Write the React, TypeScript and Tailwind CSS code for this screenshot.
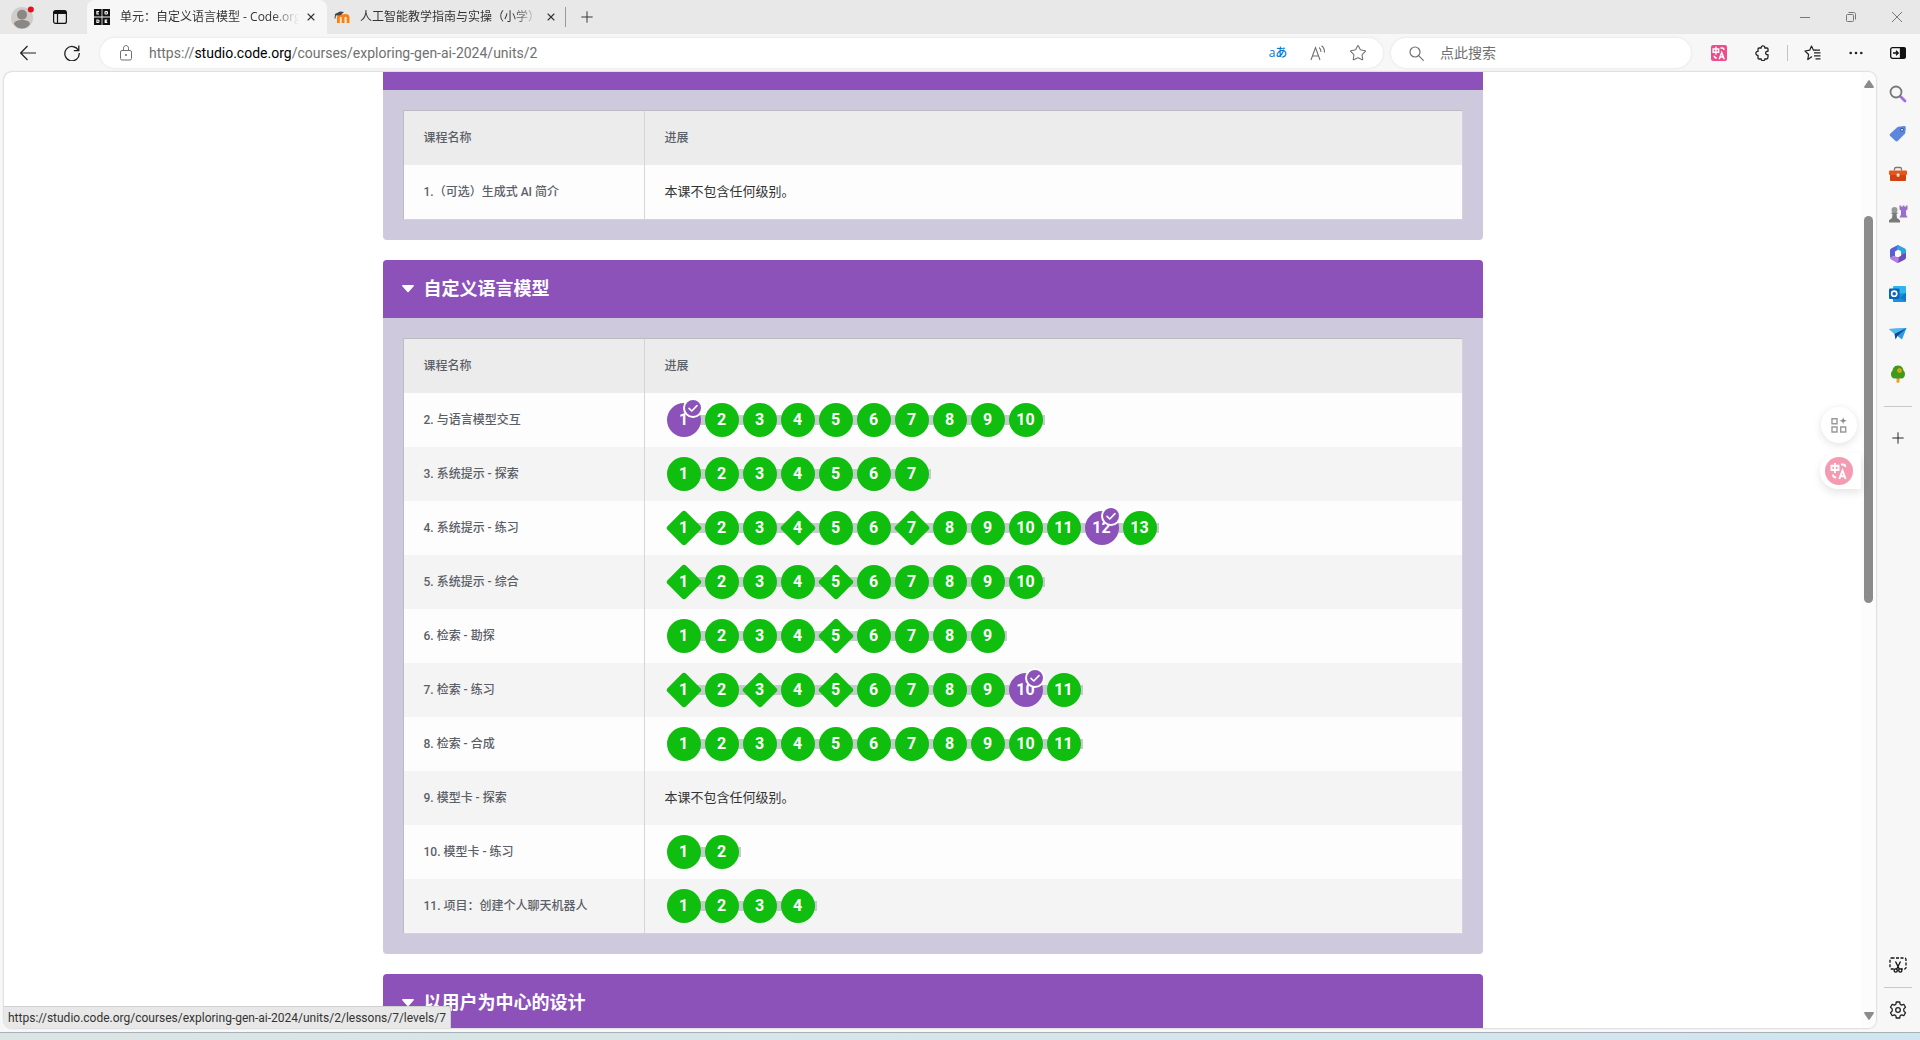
import React from 'react';
import { Plus, Star, X } from 'lucide-react';

interface Level {
  n: number;
  diamond: boolean;
  checked: boolean;
}

interface Lesson {
  name: string;
  levels: Level[];
}

const makeLevels = (count: number, diamonds: number[] = [], checked: number[] = []): Level[] =>
  Array.from({ length: count }, (_, i) => ({
    n: i + 1,
    diamond: diamonds.includes(i + 1),
    checked: checked.includes(i + 1),
  }));

const introLessons: Lesson[] = [{ name: '1.（可选）生成式 AI 简介', levels: [] }];

const modelLessons: Lesson[] = [
  { name: '2. 与语言模型交互', levels: makeLevels(10, [], [1]) },
  { name: '3. 系统提示 - 探索', levels: makeLevels(7) },
  { name: '4. 系统提示 - 练习', levels: makeLevels(13, [1, 4, 7], [12]) },
  { name: '5. 系统提示 - 综合', levels: makeLevels(10, [1, 5]) },
  { name: '6. 检索 - 勘探', levels: makeLevels(9, [5]) },
  { name: '7. 检索 - 练习', levels: makeLevels(11, [1, 3, 5], [10]) },
  { name: '8. 检索 - 合成', levels: makeLevels(11) },
  { name: '9. 模型卡 - 探索', levels: [] },
  { name: '10. 模型卡 - 练习', levels: makeLevels(2) },
  { name: '11. 项目：创建个人聊天机器人', levels: makeLevels(4) },
];

/* ---------- Course page ---------- */

function LevelBubble({ level }: { level: Level }) {
  return (
    <a
      href="#level"
      className="relative flex h-[34px] w-[34px] items-center justify-center text-base font-bold text-white"
    >
      {level.diamond ? (
        <span className="absolute h-[26px] w-[26px] rotate-45 rounded-[3px] bg-[#0fbe0f]" />
      ) : (
        <span
          className={`absolute inset-0 rounded-full ${level.checked ? 'bg-[#8c52ba]' : 'bg-[#0fbe0f]'}`}
        />
      )}
      <span className="relative">{level.n}</span>
      {level.checked && (
        <span className="absolute -top-[5px] left-4 flex h-5 w-5 items-center justify-center rounded-full border-2 border-white bg-[#8c52ba]">
          <svg viewBox="0 0 16 16" className="h-4 w-4" fill="none" stroke="white" strokeWidth="1.6">
            <path d="M4 8.300l2.800 2.700L12 5.600" strokeLinecap="round" strokeLinejoin="round" />
          </svg>
        </span>
      )}
    </a>
  );
}

function LessonTable({ lessons }: { lessons: Lesson[] }) {
  return (
    <table className="w-full table-fixed border-separate border-spacing-0 border border-[#bbbbc1] border-r-[#d2d2d8] border-b-[#d2d2d8] text-left text-[#5b6067]">
      <thead>
        <tr className="h-[54px] bg-[#ececec] text-xs">
          <th className="w-[241px] border-r border-[#d5d5d8] px-5 font-medium">课程名称</th>
          <th className="px-5 font-medium">进展</th>
        </tr>
      </thead>
      <tbody>
        {lessons.map((lesson) => (
          <tr key={lesson.name} className="h-[54px] bg-[#fdfdfd] even:bg-[#f4f4f4]">
            <td className="border-r border-[#d5d5d8] px-5 text-xs font-medium">{lesson.name}</td>
            <td className="px-5 text-[13px] text-[#333]">
              {lesson.levels.length === 0 ? (
                '本课不包含任何级别。'
              ) : (
                <div className="relative flex w-max gap-1 px-0.5">
                  <span className="absolute top-3 right-0 left-5 h-2.5 bg-[#c6cacd]" />
                  {lesson.levels.map((level) => (
                    <LevelBubble key={level.n} level={level} />
                  ))}
                </div>
              )}
            </td>
          </tr>
        ))}
      </tbody>
    </table>
  );
}

function SectionTitle({ children }: { children: React.ReactNode }) {
  return (
    <h2 className="flex h-[58px] items-center bg-[#8c52ba] px-[19px] text-lg font-bold text-white">
      <button className="flex items-center gap-2.5">
        <svg viewBox="0 0 12 8" className="h-2 w-3" fill="currentColor">
          <path d="M.8 0h10.400c.7 0 1 .8.500 1.300L6.600 6.900c-.3.400-.9.400-1.200 0L.3 1.300C-.2.8.1 0 .8 0z" />
        </svg>
        {children}
      </button>
    </h2>
  );
}

function CoursePage() {
  return (
    <main className="relative flex min-w-0 flex-1 overflow-hidden rounded-lg bg-white shadow-[0_0_2px_rgba(0,0,0,0.35)]">
      <div className="min-w-0 flex-1 overflow-hidden font-['Roboto','Noto_Sans_CJK_SC',sans-serif]">
        <div className="mx-auto flex max-w-[1100px] flex-col gap-5">
          <section className="overflow-hidden rounded-b-[4px] bg-[#cfc9de]">
            <div className="h-[18px] bg-[#8c52ba]" />
            <div className="p-5">
              <LessonTable lessons={introLessons} />
            </div>
          </section>
          <section className="overflow-hidden rounded-[4px] bg-[#cfc9de]">
            <SectionTitle>自定义语言模型</SectionTitle>
            <div className="p-5">
              <LessonTable lessons={modelLessons} />
            </div>
          </section>
          <section className="overflow-hidden rounded-t-[4px] bg-[#cfc9de]">
            <SectionTitle>以用户为中心的设计</SectionTitle>
          </section>
        </div>
      </div>

      {/* Scrollbar */}
      <div className="flex w-[15px] flex-col items-center justify-between bg-[#fcfcfc] py-2">
        <svg viewBox="0 0 10 8" className="h-2 w-2.5" fill="#8b8b8b">
          <path d="M4.300.6c.4-.6 1-.6 1.400 0l4 6c.4.700 0 1.400-.7 1.400H1C.3 8-.1 7.300.3 6.600z" />
        </svg>
        <div className="flex w-[9px] flex-1 flex-col pt-32">
          <div className="h-[387px] rounded-full bg-[#8b8b8b]" />
        </div>
        <svg viewBox="0 0 10 8" className="h-2 w-2.5" fill="#8b8b8b">
          <path d="M4.300 7.400c.4.600 1 .6 1.400 0l4-6C10.100.7 9.700 0 9 0H1C.3 0-.1.700.3 1.400z" />
        </svg>
      </div>

      {/* Floating tools of the translate extension */}
      <div className="absolute top-[335px] right-[15px] flex flex-col gap-2.5">
        <button
          aria-label="工具"
          className="ml-px flex h-9 w-9 items-center justify-center rounded-full bg-white shadow-[0_2px_8px_rgba(0,0,0,0.12)]"
        >
          <svg viewBox="0 0 16 16" className="h-4 w-4" fill="none" stroke="#999" strokeWidth="1.400">
            <path d="M1 1.700h5v5H1zM1 10h5v5H1zM9.700 10h5v5h-5z" />
            <path d="M12.200 0c.4 2.600 1 3.300 3.800 3.800-2.800.5-3.400 1.200-3.800 3.800-.4-2.600-1-3.300-3.800-3.800 2.800-.5 3.400-1.200 3.800-3.800z" fill="#888" stroke="none" />
          </svg>
        </button>
        <button
          aria-label="翻译"
          className="flex h-9 w-[41px] items-center rounded-l-full bg-white pl-[5px] shadow-[0_4px_8px_rgba(0,0,0,0.1)]"
        >
          <span className="flex h-7 w-7 items-center justify-center rounded-full bg-[#f49ab2]">
            <TranslateGlyph className="h-[18px] w-[18px]" />
          </span>
        </button>
      </div>

      {/* Link target shown while hovering */}
      <div className="absolute bottom-0 left-0 flex h-[22px] items-center rounded-tr-[3px] border-t border-r border-[#d0d0d0] bg-[#e8e8e8] px-1 text-xs text-[#333] font-['Roboto',sans-serif]">
        https://studio.code.org/courses/exploring-gen-ai-2024/units/2/lessons/7/levels/7
      </div>
    </main>
  );
}

/* ---------- Browser chrome ---------- */

function TranslateGlyph({ className }: { className: string }) {
  return (
    <svg viewBox="0 0 18 18" className={className} fill="none" stroke="#fff" strokeWidth="1.900">
      <path d="M1.500 3.800h7v4.200h-7zM5 1v10" />
      <path d="M9.300 17l3.200-8.500 3.200 8.500M10.500 14.200h4" />
      <path d="M11 2.500h2c1.500 0 2.300.8 2.300 2.500M3 12.500c0 2 .8 3 3.200 3" />
    </svg>
  );
}

function CodeOrgLogo() {
  return (
    <svg viewBox="0 0 16 16" className="h-4 w-4 shrink-0">
      <path d="M0 0h7.600v7.600H0zM8.400 0H16v7.600H8.400zM0 8.400h7.600V16H0zM8.400 8.400H16V16H8.400z" fill="#111" />
      <g fill="none" stroke="#fff" strokeWidth="1.100">
        <path d="M5 2.600H2.900v2.400H5" />
        <rect x="11" y="2.600" width="2.400" height="2.400" rx=".6" />
        <path d="M2.900 11h1.200c1.300 0 1.300 2.500 0 2.500H2.900z" />
        <path d="M13.300 11h-2.100v2.500h2.100M11.200 12.200h1.800" />
      </g>
    </svg>
  );
}

function MoodleLogo() {
  return (
    <svg viewBox="0 0 16 16" className="h-4 w-4 shrink-0" fill="none">
      <path
        d="M4.400 14V8.600c0-2.900 4.700-2.900 4.700 0V14M9.100 8.600c0-2.900 5-2.900 5 0V14"
        stroke="#f98012"
        strokeWidth="2.800"
      />
      <path d="M.5 5.200L6 2.400l4 .6-3.600 3.200-4 .4z" fill="#444" />
      <path d="M1.600 5.500L1 9.500" stroke="#444" />
    </svg>
  );
}

function Tab({ icon, title, active }: { icon: React.ReactNode; title: string; active?: boolean }) {
  return (
    <div
      className={`flex w-60 items-center gap-1.5 pr-2.5 pl-[7px] ${active ? 'rounded-t-lg bg-[#f7f7f7]' : ''}`}
    >
      {icon}
      <span className="ml-1 min-w-0 flex-1 overflow-hidden mask-r-from-85% whitespace-nowrap">{title}</span>
      <button aria-label="关闭标签页">
        <X className="h-3 w-3" strokeWidth={2.2} />
      </button>
    </div>
  );
}

function TabStrip() {
  return (
    <header className="flex h-[34px] shrink-0 items-stretch bg-[#e8e8e8] text-xs text-[#333]">
      <div className="flex w-[87px] items-center gap-[19px] pl-[11px]">
        <button aria-label="个人资料">
          <svg viewBox="0 0 23 23" className="h-[23px] w-[23px]">
            <circle cx="11" cy="12" r="11" fill="#cfccc9" />
            <circle cx="11" cy="8.800" r="5" fill="#8a8785" />
            <path d="M3 18c0-5.500 16-5.500 16 0-3.500 6-12.500 6-16 0z" fill="#8a8785" />
            <circle cx="19.800" cy="3.500" r="3" fill="#e8101c" />
          </svg>
        </button>
        <button aria-label="标签页操作">
          <svg viewBox="0 0 14 14" className="h-3.5 w-3.5" fill="none" stroke="#111" strokeWidth="1.200">
            <rect x=".6" y=".6" width="12.800" height="12.800" rx="2" />
            <path d="M1 2.400h12" strokeWidth="3.200" />
            <path d="M4.500 4v9.500" />
          </svg>
        </button>
      </div>
      <Tab icon={<CodeOrgLogo />} title="单元：自定义语言模型 - Code.org" active />
      <Tab icon={<MoodleLogo />} title="人工智能教学指南与实操（小学）" />
      <div className="-ml-0.5 h-5 w-px self-center bg-[#999]" />
      <button className="px-3" aria-label="新建标签页">
        <Plus className="h-[18px] w-[18px]" strokeWidth={1.3} />
      </button>
      <div className="ml-auto flex items-center gap-9 pr-[18px] text-[#777]">
        <button aria-label="最小化">
          <svg viewBox="0 0 10 10" className="h-2.5 w-2.5" stroke="currentColor">
            <path d="M0 5.500h10" />
          </svg>
        </button>
        <button aria-label="还原">
          <svg viewBox="0 0 10 10" className="h-2.5 w-2.5" fill="none" stroke="currentColor">
            <rect x=".5" y="2.500" width="7" height="7" rx="1" />
            <path d="M2.500.500h5c1.500 0 2 .5 2 2v5" />
          </svg>
        </button>
        <button aria-label="关闭">
          <svg viewBox="0 0 10 10" className="h-2.5 w-2.5" stroke="currentColor">
            <path d="M0 0l10 10M10 0L0 10" />
          </svg>
        </button>
      </div>
    </header>
  );
}

function Toolbar() {
  return (
    <div className="flex h-[38px] shrink-0 items-center text-[#222]">
      <div className="flex w-[100px] items-center gap-7 pl-5">
        <button aria-label="后退">
          <svg viewBox="0 0 16 16" className="h-4 w-4" fill="none" stroke="currentColor" strokeWidth="1.200">
            <path d="M16 8H.8M7.500 1L.7 8l6.800 7" />
          </svg>
        </button>
        <button aria-label="刷新">
          <svg viewBox="0 0 16 16" className="h-4 w-4" fill="none" stroke="currentColor" strokeWidth="1.300">
            <path d="M14.500 5.500A7.200 7.200 0 1 0 15.200 8M14.800.6v5H9.800" />
          </svg>
        </button>
      </div>

      <div className="mr-2 flex h-[30px] min-w-0 flex-1 items-center rounded-full bg-white pr-[5px] pl-5 text-[#707070] shadow-[0_0_3px_rgba(0,0,0,0.1)]">
        <svg viewBox="0 0 12 16" className="mr-[17px] h-4 w-3 shrink-0" fill="none" stroke="currentColor">
          <rect x=".5" y="5.500" width="11" height="9.500" rx="1.500" />
          <path d="M3.500 5.500V3.200c0-3.500 5-3.500 5 0v2.300" />
          <circle cx="6" cy="10" r=".6" fill="currentColor" />
        </svg>
        <div
          role="textbox"
          aria-label="地址栏"
          contentEditable
          suppressContentEditableWarning
          className="min-w-0 flex-1 text-sm font-['Roboto',sans-serif]"
        >
          https://<span className="text-black">studio.code.org</span>/courses/exploring-gen-ai-2024/units/2
        </div>
        <button className="w-10 text-xs font-medium text-[#0078d4]">aあ</button>
        <button className="flex w-10 justify-center" aria-label="大声朗读">
          <svg viewBox="0 0 16 16" className="h-4 w-4" fill="none" stroke="currentColor" strokeWidth="1.100">
            <path d="M1 15L5.500 2.500 10 15M2.500 11h6" />
            <path d="M9 2.500c1.500 1 2 2.500 2 4.500M11.500.8c2.300 1.500 3 3.700 3 6.700" />
          </svg>
        </button>
        <button className="flex w-10 justify-center" aria-label="收藏">
          <Star className="h-[18px] w-[18px]" strokeWidth={1.4} />
        </button>
      </div>

      <div className="flex h-[30px] w-[300px] items-center gap-4 rounded-full bg-white px-[18px] text-[#707070] shadow-[0_0_3px_rgba(0,0,0,0.1)]">
        <svg viewBox="0 0 15 15" className="h-[15px] w-[15px] shrink-0" fill="none" stroke="currentColor" strokeWidth="1.200">
          <circle cx="6" cy="6" r="5" />
          <path d="M9.700 9.700l5 5" />
        </svg>
        <input
          aria-label="搜索"
          placeholder="点此搜索"
          className="min-w-0 flex-1 text-sm outline-none placeholder:text-[#707070]"
        />
      </div>

      <div className="flex w-[229px] items-center pr-3.5 pl-5">
        <button aria-label="翻译扩展" className="rounded-[2px] bg-[#ee4d8b] p-px">
          <TranslateGlyph className="h-3.5 w-3.5" />
        </button>
        <button aria-label="扩展" className="ml-7">
          <svg viewBox="0 0 16 16" className="h-4 w-4" fill="none" stroke="currentColor" strokeWidth="1.300" strokeLinejoin="round">
            <path d="M4 3h2.200c-.4-2.900 4-2.900 3.600 0H12c.6 0 1 .4 1 1v2.300c-3.200-.4-3.200 3.800 0 3.400V12c0 1.200-.4 2-1.500 2H9.800c.4 2.300-4 2.300-3.600 0H4c-.6 0-1-.4-1-1v-2.700C.2 10.600.2 6 3 6.400V4c0-.6.4-1 1-1z" />
          </svg>
        </button>
        <span className="ml-4 h-4 w-px bg-[#c4c4c4]" />
        <button aria-label="收藏夹" className="ml-4">
          <svg viewBox="0 0 17 16" className="h-4 w-[17px]" fill="none" stroke="currentColor" strokeWidth="1.200" strokeLinejoin="round">
            <path d="M8 11.500l-4.200 3 .8-5L1 6l4.700-.8L7.500 1l2 4.200h2" />
            <path d="M10 7.800h6.500M10 10.800h6.500M11.500 13.800h5M11 5.200h5" />
          </svg>
        </button>
        <button aria-label="更多" className="ml-7">
          <svg viewBox="0 0 14 4" className="h-1 w-3.5" fill="currentColor">
            <circle cx="1.700" cy="2" r="1.300" />
            <circle cx="7" cy="2" r="1.300" />
            <circle cx="12.300" cy="2" r="1.300" />
          </svg>
        </button>
        <button aria-label="边栏" className="ml-auto">
          <svg viewBox="0 0 16 12" className="h-3 w-4" fill="none" stroke="#111" strokeWidth="1.300">
            <rect x=".7" y=".7" width="14.600" height="10.600" rx="1.800" />
            <path d="M10.500 1h3.500c.8 0 1.300.5 1.300 1.300v7.400c0 .8-.5 1.300-1.300 1.300h-3.500z" fill="#111" />
            <path d="M3 6h5M6 3.800L8.200 6 6 8.200" />
          </svg>
        </button>
      </div>
    </div>
  );
}

const sidebarItems: { label: string; icon: React.ReactNode }[] = [
  {
    label: '搜索',
    icon: (
      <>
        <path d="M12.500 12.500l4.500 4.500" stroke="#a66be0" strokeWidth="2.800" strokeLinecap="round" />
        <circle cx="8" cy="8" r="5.500" fill="none" stroke="#777" strokeWidth="1.800" />
      </>
    ),
  },
  {
    label: '购物',
    icon: (
      <>
        <path d="M10.500 2.700l5.500-.7c1.100-.1 1.800.6 1.800 1.600l-.5 5.200c0 .5-.3.9-.6 1.200l-7 7c-.7.6-1.500.6-2.200 0l-5.300-5c-.7-.7-.7-1.500 0-2.200l6.800-6.400c.4-.4.900-.6 1.500-.7z" fill="#5c87dd" />
        <circle cx="14" cy="5.800" r="1.500" fill="#dce8ff" stroke="#2d4f9e" />
      </>
    ),
  },
  {
    label: '工具',
    icon: (
      <>
        <path d="M6.500 6.500V5c0-1 .5-1.500 1.500-1.500h4c1 0 1.500.5 1.500 1.500v1.500" fill="none" stroke="#777" strokeWidth="1.300" />
        <rect x="1" y="6.500" width="18" height="4.500" rx="1" fill="#e8541a" />
        <path d="M2 11h16v4.700c0 .8-.5 1.300-1.300 1.300H3.300c-.8 0-1.300-.5-1.300-1.300z" fill="#d2420f" />
        <rect x="8.700" y="9.500" width="2.800" height="3.200" rx=".7" fill="#e3e3e3" />
      </>
    ),
  },
  {
    label: '游戏',
    icon: (
      <>
        <path d="M11.500 1.500h1.700v1.300h1.500V1.500h1.800v1.300H18V1.500h1.500v4l-1.500 1v4l1.500 3h-8l1.500-3v-4l-1.500-1z" fill="#9a6dd0" />
        <circle cx="6.500" cy="6" r="3" fill="#999" />
        <path d="M3.500 8.500h6v1.500h-1l.5 4 3 2.200v2.300H1v-2.300L4 14l.5-4h-1z" fill="#7a7a7a" />
      </>
    ),
  },
  {
    label: 'Microsoft 365',
    icon: (
      <>
        <path d="M10 1L3.500 4.200C2.500 4.800 2 5.500 2 6.500v7l5-1.500V7.500l4-2.500c1-.8.8-3-1-4z" fill="#5b5fd6" />
        <path d="M10 1l6.500 3.200c1 .6 1.500 1.300 1.500 2.300V11l-5-1V7.200L8.500 4.500z" fill="#2aa5e0" />
        <path d="M18 9v4.500c0 1-.5 1.700-1.500 2.300L11 18.500c-.8.400-1.500.400-2.200 0L7 14l6-3.500z" fill="#6a4fb8" />
        <path d="M2 13.500l5-1.500 4 2.500-1 4.400c-.5 0-1 0-1.500-.3l-5-2.800c-.9-.5-1.500-1.300-1.500-2.300z" fill="#b57be0" />
        <path d="M10 6.700l3 1.700v3.300l-3 1.700-3-1.700V8.400z" fill="#fff" />
      </>
    ),
  },
  {
    label: 'Outlook',
    icon: (
      <>
        <rect x="5" y="2" width="13" height="13" rx="1" fill="#32b5ee" />
        <path d="M5 10l13-1v8c0 .6-.4 1-1 1H6c-.6 0-1-.4-1-1z" fill="#1591df" />
        <path d="M12 13.500l6-4.500v8.500z" fill="#1277c9" />
        <rect x="1" y="4.500" width="10.500" height="10.500" rx="1" fill="#0a63b8" />
        <circle cx="6.200" cy="9.700" r="2.600" fill="none" stroke="#fff" strokeWidth="1.600" />
      </>
    ),
  },
  {
    label: 'Drop',
    icon: (
      <>
        <path d="M1 5l17.500-1L14 15.500 9.500 12z" fill="#2c9be4" />
        <path d="M1 5l17.500-1L6.500 10z" fill="#4db8f2" />
        <path d="M6.500 10l12-6-9 8-2 3.500z" fill="#0c4a8a" />
      </>
    ),
  },
  {
    label: '树',
    icon: (
      <>
        <path d="M8.500 12h3v6c0 .6-.6.800-1.500.8s-1.500-.2-1.500-.8z" fill="#f0a020" />
        <path d="M10 1.500c4.500 0 5 3.500 5.500 5 2.500 2 1.800 8-2 8h-7c-3.800 0-4.500-6-2-8 .5-1.500 1-5 5.500-5z" fill="#3d9a1c" />
        <circle cx="11.500" cy="6.500" r="2.200" fill="#f7b500" />
        <circle cx="11.500" cy="6.500" r=".8" fill="#d9531e" />
      </>
    ),
  },
];

function Sidebar() {
  return (
    <aside className="-mb-0.5 flex w-11 shrink-0 flex-col items-center pt-0.5">
      {sidebarItems.map((item) => (
        <button key={item.label} aria-label={item.label} className="flex h-10 w-10 items-center justify-center">
          <svg viewBox="0 0 20 20" className="h-5 w-5">
            {item.icon}
          </svg>
        </button>
      ))}
      <div className="mt-3 h-px w-7 bg-[#c8c8c8]" />
      <button aria-label="自定义" className="mt-[11px] flex h-10 w-10 items-center justify-center text-[#222]">
        <Plus className="h-[18px] w-[18px]" strokeWidth={1.3} />
      </button>

      <button aria-label="屏幕截图" className="mt-auto flex h-10 w-10 items-center justify-center">
        <svg viewBox="0 0 18 16" className="h-4 w-[18px]" fill="none" stroke="#111" strokeWidth="1.300">
          <rect x="1" y="1" width="16" height="11" rx="1.500" strokeDasharray="3 1.500" />
          <path d="M6.500 5l4 7.500M11.500 5l-4 7.500" stroke="#f7f7f7" strokeWidth="3" />
          <path d="M6.500 4.500l4 8M11.500 4.500l-4 8" />
          <circle cx="6.700" cy="13.500" r="1.600" fill="#f7f7f7" />
          <circle cx="11.300" cy="13.500" r="1.600" fill="#f7f7f7" />
        </svg>
      </button>
      <div className="mt-0.5 h-px w-7 bg-[#c8c8c8]" />
      <button aria-label="设置" className="mt-0.5 flex h-10 w-10 items-center justify-center">
        <svg viewBox="0 0 18 18" className="h-[18px] w-[18px]" fill="none" stroke="#222" strokeWidth="1.300" strokeLinejoin="round">
          <path d="M7.300 1h3.400l.5 2.300 1.300.8 2.300-.8 1.700 3-1.700 1.600v2.200l1.700 1.600-1.700 3-2.300-.8-1.300.8-.5 2.300H7.300l-.5-2.300-1.300-.8-2.300.8-1.700-3 1.700-1.600V7.900L1.500 6.300l1.700-3 2.300.8 1.300-.8z" />
          <circle cx="9" cy="9" r="2.300" />
        </svg>
      </button>
    </aside>
  );
}

export default function App() {
  return (
    <div className="flex h-screen flex-col overflow-hidden bg-[#f7f7f7] font-['Open_Sans','Noto_Sans_CJK_SC',sans-serif]">
      <TabStrip />
      <Toolbar />
      <div className="flex min-h-0 flex-1 pb-1 pl-1">
        <CoursePage />
        <Sidebar />
      </div>
      <div className="h-2 shrink-0 border-t border-[#a9b0b8] bg-linear-to-r from-[#dbe5e4] to-[#cfe6f0]" />
    </div>
  );
}
